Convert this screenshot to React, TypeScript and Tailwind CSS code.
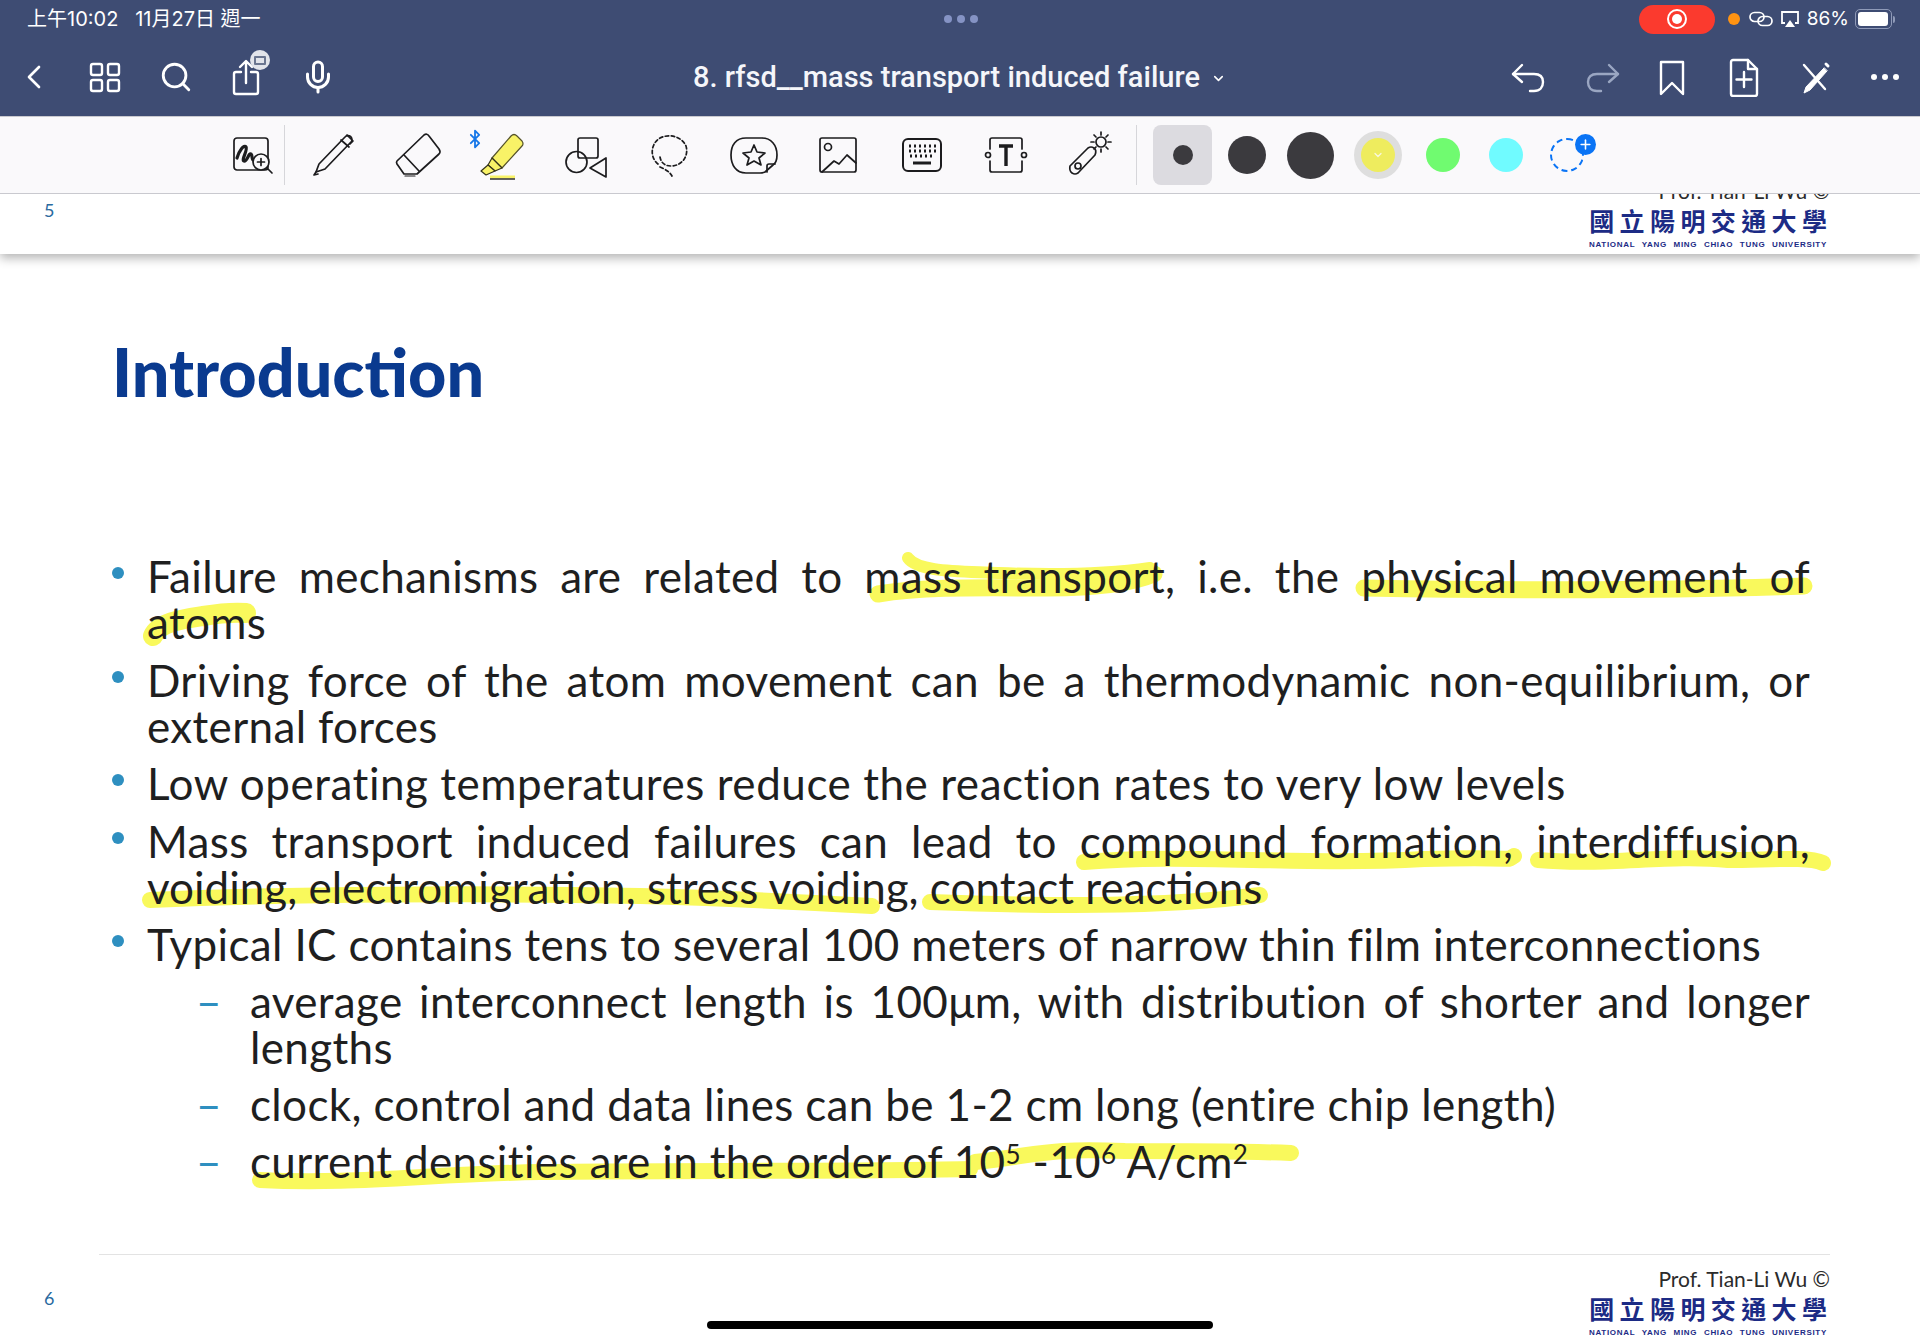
import React from "react";
import { Bluetooth, ChevronDown, ChevronLeft, Mic, Plus, Search } from "lucide-react";

const BODY = "[font-family:Lato,sans-serif]";
const JUST = "block text-justify [text-align-last:justify]";

function Ico({ children, w = 40, h = 40 }: { children: React.ReactNode; w?: number; h?: number }) {
  return (
    <svg width={w} height={h} viewBox={`0 0 ${w} ${h}`} fill="none" stroke="currentColor" strokeWidth="2.4" strokeLinecap="round" strokeLinejoin="round">
      {children}
    </svg>
  );
}

function StatusBar() {
  return (
    <div className="h-[38px] flex items-center pl-[27px] pr-[25px] text-white">
      <div className="flex-1 text-[20px] [font-family:Inter,'Noto_Sans_CJK_TC',sans-serif] whitespace-pre">上午10:02   11月27日 週一</div>
      <div className="flex gap-[5px] mr-[661px]">
        <span className="w-2 h-2 rounded-full bg-[#8593c4]" />
        <span className="w-2 h-2 rounded-full bg-[#8593c4]" />
        <span className="w-2 h-2 rounded-full bg-[#8593c4]" />
      </div>
      <div className="w-[76px] h-[29px] rounded-full bg-[#fb3a2e] flex items-center justify-center mr-[13px]">
        <span className="w-[20px] h-[20px] rounded-full border-2 border-white flex items-center justify-center">
          <span className="w-[10px] h-[10px] rounded-full bg-white" />
        </span>
      </div>
      <span className="w-3 h-3 rounded-full bg-[#ff9312] mr-[9px]" />
      <svg width="24" height="16" viewBox="0 0 24 16" fill="none" stroke="white" strokeWidth="1.7" className="mr-[7px]">
        <rect x="1" y="1.5" width="14" height="9" rx="4.5" />
        <rect x="9" y="5.5" width="14" height="9" rx="4.5" />
      </svg>
      <svg width="20" height="18" viewBox="0 0 20 18" fill="none" className="mr-[7px]">
        <path d="M5 13H2V2h16v11h-3" stroke="white" strokeWidth="1.8" />
        <path d="M10 10l5 7H5z" fill="white" />
      </svg>
      <span className="text-[19px] [font-family:Inter,sans-serif] mr-[6px]">86%</span>
      <div className="w-[37px] h-[20px] rounded-[5px] border border-[#8f9ab8] p-[2px]">
        <div className="w-[30px] h-full rounded-[3px] bg-white" />
      </div>
      <span className="w-[2px] h-[7px] bg-[#8f9ab8] ml-[1px] rounded-r" />
    </div>
  );
}

function NavBar() {
  const box = "w-10 h-10 flex items-center justify-center";
  return (
    <div className="h-[78px] flex items-center pl-[14px] pr-[15px] text-white">
      <div className="flex gap-[31px]">
        <div className={box}><ChevronLeft size={44} strokeWidth={1.6} /></div>
        <div className={box}>
          <Ico><rect x="6" y="7" width="11" height="11" rx="2" /><rect x="23" y="7" width="11" height="11" rx="2" /><rect x="6" y="23" width="11" height="11" rx="2" /><rect x="23" y="23" width="11" height="11" rx="2" /></Ico>
        </div>
        <div className={box}><Search size={34} strokeWidth={2} /></div>
        <div className={`${box} relative`}>
          <Ico>
            <path d="M14 15H9a2 2 0 0 0-2 2v18a2 2 0 0 0 2 2h20a2 2 0 0 0 2-2V17a2 2 0 0 0-2-2h-5" />
            <path d="M19 26V5M13 10l6-6 6 6" />
          </Ico>
          <span className="absolute -top-[7px] right-[-3px] w-[20px] h-[20px] rounded-full bg-[#e2e4ea] flex items-center justify-center">
            <span className="w-[12px] h-[9px] border-2 border-[#6b7690] rounded-[1px]" />
          </span>
        </div>
        <div className={box}><Mic size={36} strokeWidth={2} /></div>
      </div>
      <div className="flex-1 flex items-center justify-center gap-[11px] pl-[71px] pt-[2px]">
        <span className="text-[29px] font-medium text-[#f5f6fa] [font-family:Roboto,sans-serif]">8. rfsd__mass transport induced failure</span>
        <ChevronDown size={15} strokeWidth={2.5} />
      </div>
      <div className="flex gap-[31px]">
        <div className={box}>
          <Ico><path d="M12 8l-9 9 9 8" /><path d="M3 17h21c6 0 9 3 9 8s-3 9-9 9h-4" /></Ico>
        </div>
        <div className={`${box} text-[#9aa6c2]`}>
          <Ico><path d="M28 8l9 9-9 8" /><path d="M37 17H16c-6 0-9 3-9 8s3 9 9 9h4" /></Ico>
        </div>
        <div className={box}>
          <Ico><path d="M9 5h22v32l-11-11-11 11z" /></Ico>
        </div>
        <div className={box}>
          <Ico>
            <path d="M8 5a2 2 0 0 1 2-2h15l9 9v25a2 2 0 0 1-2 2H10a2 2 0 0 1-2-2z" />
            <path d="M25 3v9h9M21 15v15M13.500 22.500h15" />
          </Ico>
        </div>
        <div className={box}>
          <Ico>
            <path d="M10 8l21 24" />
            <path d="M30 11L12 30l-2 6 6-3 17-19z" fill="white" strokeWidth="1" />
            <path d="M32 7l2 2" strokeWidth="3" />
          </Ico>
        </div>
        <div className={`${box} gap-[5px]`}>
          <span className="w-[6px] h-[6px] rounded-full bg-white" />
          <span className="w-[6px] h-[6px] rounded-full bg-white" />
          <span className="w-[6px] h-[6px] rounded-full bg-white" />
        </div>
      </div>
    </div>
  );
}

function ToolIcon({ children }: { children: React.ReactNode }) {
  return (
    <svg width="48" height="48" viewBox="0 0 48 48" fill="none" stroke="#1c1c1e" strokeWidth="1.7" strokeLinecap="round" strokeLinejoin="round" className="overflow-visible">
      {children}
    </svg>
  );
}

function Toolbar() {
  return (
    <div className="relative z-20 h-[78px] bg-[#faf9fb] border-t border-b border-[#c9c9cf] flex items-center pl-[228px] text-[#1c1c1e]">
      <ToolIcon>
        <rect x="6" y="7" width="34" height="32" rx="3" />
        <path d="M9 27c2-7 7-14 9-11s-5 13-2 14 5-9 7-7 0 6 3 6" strokeWidth="3.2" />
        <circle cx="33" cy="31" r="8" fill="#faf9fb" />
        <path d="M33 27.500v7M29.500 31h7M39 37l5 5" />
      </ToolIcon>
      <div className="w-px h-[60px] bg-[#d6d6da] ml-2 mr-[25px]" />
      <div className="flex gap-[36px] items-center">
        <ToolIcon>
          <path d="M6 41l3-8 26-27a3 3 0 0 1 6 5L15 38z" />
          <path d="M31 9l8 7M37 4l6 6-3 3M6 41l-2 3 4-1" />
        </ToolIcon>
        <ToolIcon>
          <path d="M3 30L30 4q3-2 5 1l10 13q2 3 0 5L23 43H10L3 33q-1-2 0-3z" />
          <path d="M10 24l15 16" />
          <path d="M11 45h10" strokeWidth="1.200" />
        </ToolIcon>
        <div className="relative w-12 h-12">
          <Bluetooth size={20} strokeWidth={2.2} className="absolute -top-[2px] -left-[13px] text-[#1677e8]" />
          <ToolIcon>
            <path d="M14 27L33 5q3-3 6 0l5 5q2 3 0 5L24 37z" fill="#f8f267" stroke="#55532a" strokeWidth="1.200" />
            <path d="M14 27l-4 7 7 6 7-3z" fill="#f8f267" stroke="#33321a" strokeWidth="1.200" />
            <path d="M10 34l-7 6 5 4 9-4z" fill="#f8f267" stroke="#33321a" strokeWidth="1.200" />
            <path d="M12 46h25" stroke="#f8f267" strokeWidth="3" strokeLinecap="butt" />
            <path d="M12 48h25" stroke="#222" strokeWidth="1.400" strokeLinecap="butt" />
          </ToolIcon>
        </div>
        <ToolIcon>
          <rect x="16" y="7" width="20" height="20" rx="2" />
          <circle cx="14.500" cy="31" r="10.500" />
          <path d="M44 27v19l-16-9z" />
        </ToolIcon>
        <ToolIcon>
          <path d="M12 33C4 27 4 13 14 7c10-5 22-1 26 8 3 10-4 20-15 20-6 0-10-3-11-9" strokeDasharray="3.500 2.500" />
          <path d="M14 36c5 2 10 5 12 9" strokeDasharray="3.500 2.500" />
        </ToolIcon>
        <ToolIcon>
          <path d="M16 7h16c9 0 15 7 15 17 0 4-1 8-4 10l-8 7c-2 1-3 1-5 1H16C6 42 1 34 1 24S6 7 16 7z" />
          <path d="M24 14l3 7 8 1-6 5 2 7-7-4-7 4 2-7-6-5 8-1z" />
          <path d="M37 41v-6q0-2 2-2h6" />
        </ToolIcon>
        <ToolIcon>
          <rect x="6" y="7" width="36" height="34" rx="2" />
          <circle cx="14" cy="16" r="3.500" />
          <path d="M8 41l12-11 5 3 8-9 9 8" />
        </ToolIcon>
        <ToolIcon>
          <rect x="5" y="8" width="38" height="32" rx="5" strokeWidth="2" />
          <path d="M11 15h2M16 15h2M21 15h2M26 15h2M31 15h2M36 15h2M11 20h2M16 20h2M21 20h2M26 20h2M31 20h2M36 20h2M12 25h2M17 25h2M22 25h2M27 25h2M32 25h2" strokeWidth="3" strokeLinecap="butt" />
          <path d="M15 32h18" strokeWidth="3" strokeLinecap="butt" />
        </ToolIcon>
        <ToolIcon>
          <path d="M8 18V9q0-2 2-2h28q2 0 2 2v9M8 30v9q0 2 2 2h28q2 0 2-2v-9" />
          <circle cx="6" cy="24" r="2.500" />
          <circle cx="42" cy="24" r="2.500" />
          <path d="M17 15h14M24 15v20" strokeWidth="3.400" strokeLinecap="butt" />
        </ToolIcon>
        <ToolIcon>
          <path d="M4 35L22 17q3-2 6 0t1 7L12 42q-3 2-6 0t-2-7z" />
          <circle cx="12" cy="35" r="3" />
          <circle cx="35" cy="11" r="5" />
          <path d="M35 1v3M35 18v3M45 11h-3M28 11h-3M42 4l-2 2M30 16l-2 2M42 18l-2-2M30 6l-2-2" />
        </ToolIcon>
      </div>
      <div className="w-px h-[60px] bg-[#d6d6da] ml-[22px] mr-[16px]" />
      <div className="w-[59px] h-[60px] rounded-lg bg-[#dcdbe0] flex items-center justify-center">
        <span className="w-[20px] h-[20px] rounded-full bg-[#3b3a3e]" />
      </div>
      <span className="ml-[16px] w-[38px] h-[38px] rounded-full bg-[#3b3a3e]" />
      <span className="ml-[21px] w-[47px] h-[47px] rounded-full bg-[#3b3a3e]" />
      <span className="ml-[20px] w-[48px] h-[48px] rounded-full bg-[#dedede] flex items-center justify-center">
        <span className="w-[34px] h-[34px] rounded-full bg-[#eeec5e] flex items-center justify-center text-[#f8f8e0]">
          <ChevronDown size={12} strokeWidth={2.5} />
        </span>
      </span>
      <span className="ml-[24px] w-[34px] h-[34px] rounded-full bg-[#70fb70]" />
      <span className="ml-[29px] w-[34px] h-[34px] rounded-full bg-[#70fbff]" />
      <span className="relative ml-[27px] w-[34px] h-[34px] rounded-full border-2 border-dashed border-[#0a74f5]">
        <span className="absolute -top-[6px] -right-[14px] w-[21px] h-[21px] rounded-full bg-[#0a74f5] text-white flex items-center justify-center">
          <Plus size={15} strokeWidth={2.5} />
        </span>
      </span>
    </div>
  );
}

function SlideFooter({ page }: { page: number }) {
  return (
    <div className="flex items-center justify-between pl-[44px] pr-[90px] pb-[4px]">
      <span className="text-[18px] text-[#2a6aa0] pb-[8px] [font-family:Lato,sans-serif]">{page}</span>
      <div className="flex flex-col items-end w-[240px]">
        <span className={`text-[21px] leading-[24px] text-[#2b2b2b] ${BODY}`}>Prof. Tian-Li Wu ©</span>
        <span className="mt-[2px] text-[25px] leading-[30px] font-semibold text-[#1c2b85] [font-family:'Noto_Sans_CJK_TC',sans-serif] tracking-[5.400px] mr-[-2.400px] whitespace-nowrap">
          國立陽明交通大學
        </span>
        <span className="mt-[5px] w-[238px] mr-[3px] text-[8px] leading-[10px] font-bold tracking-[0.700px] text-[#1c2b85] whitespace-nowrap text-justify [text-align-last:justify] [font-family:'Liberation_Sans',sans-serif]">
          NATIONAL YANG MING CHIAO TUNG UNIVERSITY
        </span>
      </div>
    </div>
  );
}

function Highlights() {
  const c = "#f9f95c";
  return (
    <svg className="absolute left-0 top-[-254px] pointer-events-none" width="1920" height="1342" fill="none" stroke={c} strokeLinecap="round" strokeLinejoin="round">
      <path d="M908 558c10 14 50 13 90 15 50 2 110 1 152-5" strokeWidth="12" />
      <path d="M878 594c50-8 110-6 170-6 40 0 80-3 106-14" strokeWidth="17" />
      <path d="M1364 588c120 2 300 3 440-2" strokeWidth="17" />
      <path d="M153 636c6-14 30-17 50-20 18-3 32-4 43-3" strokeWidth="20" />
      <path d="M1084 862c100-9 220 4 340-3 100-3 80 3 90-3" strokeWidth="16" />
      <path d="M1538 860c70 6 130-6 190 0 40 0 80-4 95 3" strokeWidth="16" />
      <path d="M150 900c140-6 330-7 490-4 80 2 160 6 232 10" strokeWidth="16" />
      <path d="M930 902c110 4 230 6 330-7" strokeWidth="16" />
      <path d="M260 1180c90 5 170-6 280-8 130-2 290 0 430-3" strokeWidth="16" />
      <path d="M975 1162c70-8 70-14 150-11 50 0 110 0 166 2" strokeWidth="16" />
    </svg>
  );
}

function Bullet({ children }: { children: React.ReactNode }) {
  return (
    <li className="flex mt-[11.500px] first:mt-0">
      <span className="w-[35px] pt-[14px] shrink-0">
        <span className="block w-[12px] h-[12px] rounded-full bg-[#2e8fc0]" />
      </span>
      <div className="flex-1">{children}</div>
    </li>
  );
}

function Sub({ children }: { children: React.ReactNode }) {
  return (
    <li className="flex mt-[11px]">
      <span className="w-[54px] shrink-0 text-[#2e8fc0]">–</span>
      <div className="flex-1">{children}</div>
    </li>
  );
}

export default function App() {
  return (
    <div className="w-[1920px] h-[1342px] overflow-hidden flex flex-col bg-white relative">
      <div className="relative z-20 bg-[#3e4c73] h-[116px] shrink-0">
        <StatusBar />
        <NavBar />
      </div>
      <Toolbar />

      {/* previous slide, cut off by the toolbar */}
      <div className="relative z-10 h-[60px] shrink-0 bg-white overflow-hidden flex flex-col justify-end shadow-[0_4px_10px_rgba(0,0,0,0.3)]">
        <SlideFooter page={5} />
      </div>

      {/* current slide */}
      <div className="relative flex-1 flex flex-col">
        <Highlights />
        <h1 className="relative mt-[80px] pl-[112px] text-[66.500px] leading-[74px] font-black text-[#0a3a8f] [font-family:Lato,sans-serif]">
          Introduction
        </h1>
        <ul className={`relative mt-[145px] pl-[112px] pr-[110px] text-[44px] leading-[46px] tracking-[0.350px] text-[#1f1f1f] ${BODY}`}>
          <Bullet>
            <span className={JUST}>Failure mechanisms are related to mass transport, i.e. the physical movement of</span>
            <span className="block">atoms</span>
          </Bullet>
          <Bullet>
            <span className={JUST}>Driving force of the atom movement can be a thermodynamic non-equilibrium, or</span>
            <span className="block">external forces</span>
          </Bullet>
          <Bullet><span className="tracking-[0.550px]">Low operating temperatures reduce the reaction rates to very low levels</span></Bullet>
          <Bullet>
            <span className={JUST}>Mass transport induced failures can lead to compound formation, interdiffusion,</span>
            <span className="block tracking-normal">voiding, electromigration, stress voiding, contact reactions</span>
          </Bullet>
          <Bullet>Typical IC contains tens to several 100 meters of narrow thin film interconnections</Bullet>
          <ul className="pl-[84px]">
            <Sub>
              <span className={JUST}>average interconnect length is 100μm, with distribution of shorter and longer</span>
              <span className="block">lengths</span>
            </Sub>
            <Sub>clock, control and data lines can be 1-2 cm long (entire chip length)</Sub>
            <Sub>
              current densities are in the order of 10<sup className="text-[26px] leading-none top-[-14px]">5</sup> -10<sup className="text-[26px] leading-none top-[-14px]">6</sup> A/cm<sup className="text-[26px] leading-none top-[-14px]">2</sup>
            </Sub>
          </ul>
        </ul>
        <div className="mt-auto">
          <div className="ml-[99px] mr-[90px] border-t border-[#e3e3e3] mb-[12px]" />
          <SlideFooter page={6} />
        </div>
      </div>

      {/* home indicator */}
      <div className="absolute z-30 left-[707px] top-[1321px] w-[506px] h-[8px] rounded-full bg-black" />
    </div>
  );
}
